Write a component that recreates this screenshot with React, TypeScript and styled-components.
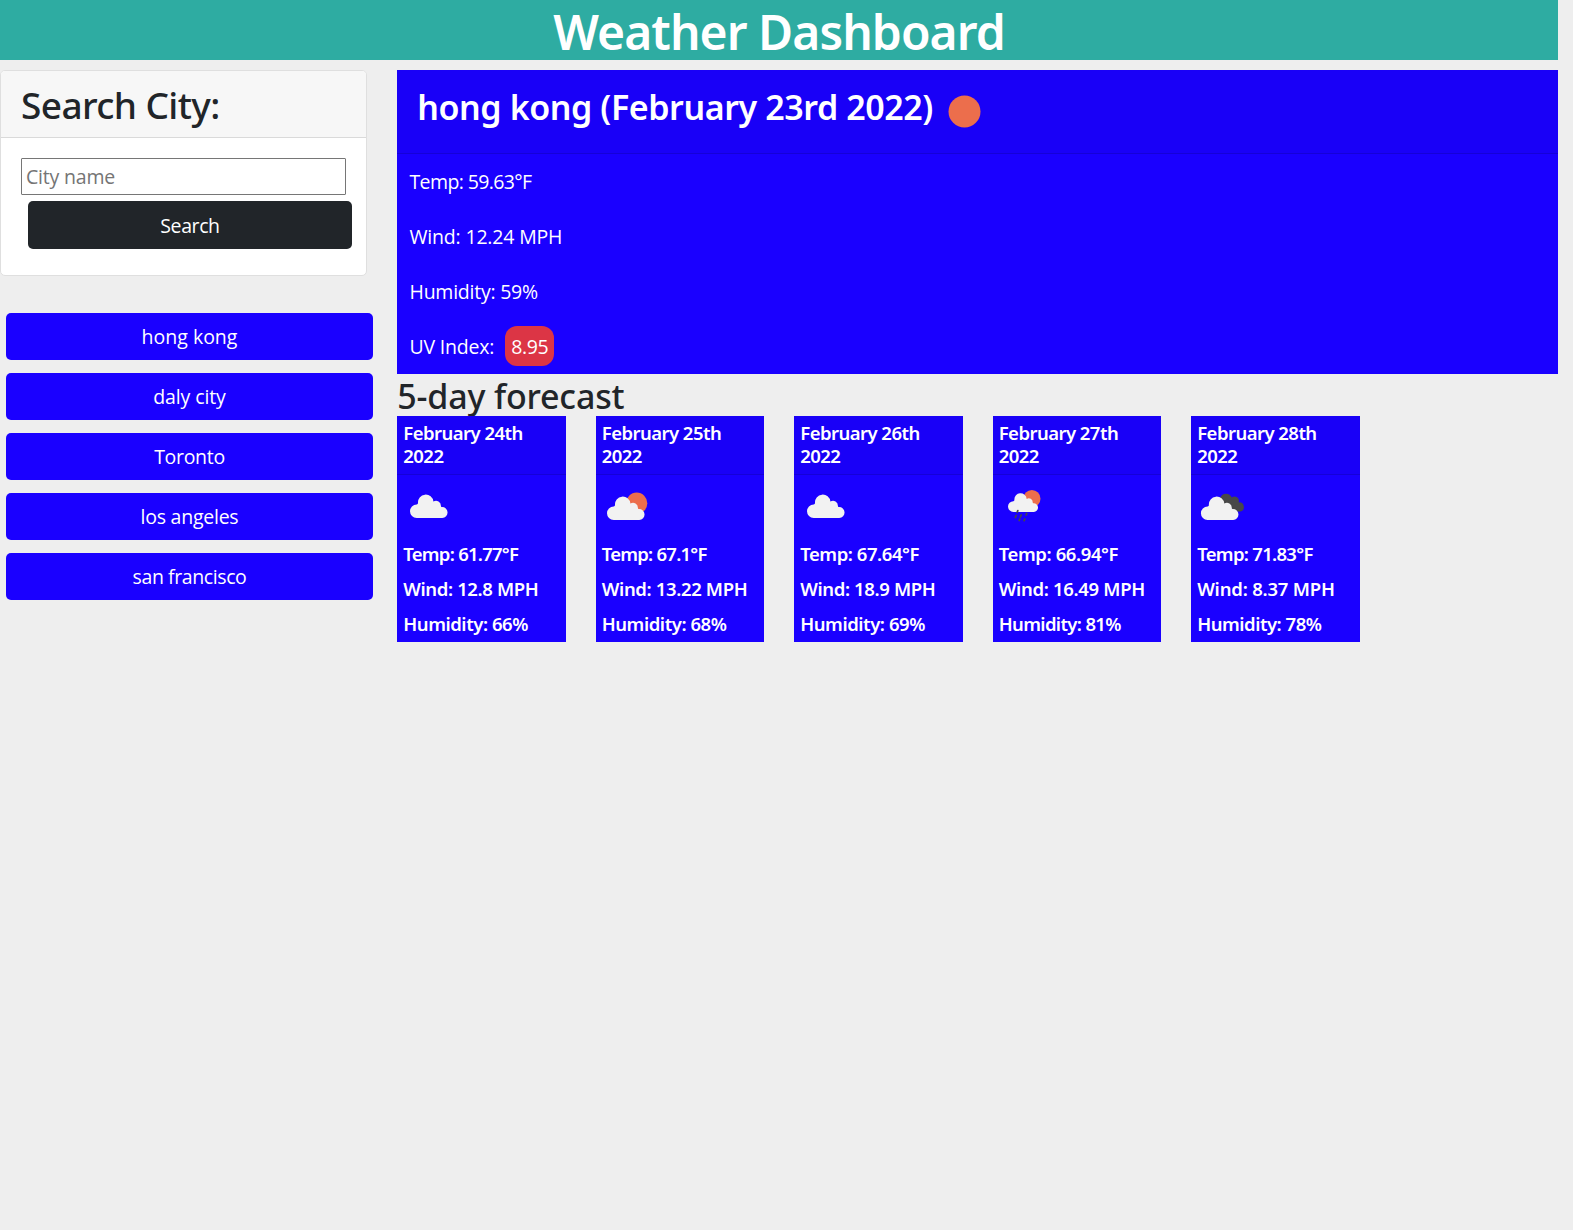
import React from "react";
import styled, { createGlobalStyle } from "styled-components";

const BLUE = "#1a00ff";

const GlobalStyle = createGlobalStyle`
  *, *::before, *::after { box-sizing: border-box; }
  body {
    margin: 0;
    background: #eeeeee;
    color: #212529;
    font-family: "Open Sans", "Noto Sans", sans-serif;
    font-size: 19.5px;
    line-height: 30px;
  }
  h1, h2, h3, h4, p { margin: 0; }
`;

const Page = styled.div`
  width: 1558px;
  min-height: 1230px;
`;

const Header = styled.header`
  height: 60px;
  padding-top: 2px;
  background: #2eaca2;
  color: #fff;
  text-align: center;
`;

const Title = styled.h1`
  font: 600 48px/60px "Noto Sans", sans-serif;
  letter-spacing: -0.95px;
`;

const Columns = styled.div`
  display: flex;
  align-items: flex-start;
  padding-top: 10px;
`;

const Sidebar = styled.aside`
  flex: 0 0 397.25px;
`;

const SearchCard = styled.section`
  width: 367px;
  height: 206px;
  background: #fff;
  border: 1px solid #dfdfdf;
  border-radius: 5px;
  overflow: hidden;
`;

const SearchHead = styled.div`
  height: 67px;
  padding: 10px 20px;
  background: #f7f7f7;
  border-bottom: 1px solid #dadada;
`;

const SearchTitle = styled.h2`
  font: 500 37px/48px "Noto Sans", sans-serif;
  letter-spacing: -0.6px;
`;

const SearchForm = styled.form`
  display: flex;
  flex-direction: column;
  gap: 6px;
  padding: 20px 14px 0 20px;
`;

const CityInput = styled.input`
  width: 325px;
  height: 37px;
  padding: 1px 4px;
  border: 1px solid #767676;
  border-radius: 1px;
  background: #fff;
  font: 400 19.5px/30px "Open Sans", sans-serif;
  letter-spacing: -0.2px;
  &::placeholder { color: #757575; opacity: 1; }
`;

const Button = styled.button<{ $dark?: boolean; $spacing?: number }>`
  display: block;
  height: ${(p) => (p.$dark ? 48 : 47)}px;
  padding: ${(p) => (p.$dark ? 2 : 0)}px 0 0;
  border: 0;
  border-radius: 5px;
  background: ${(p) => (p.$dark ? "#212529" : BLUE)};
  color: #fff;
  font: 400 19.5px/30px "Open Sans", sans-serif;
  letter-spacing: ${(p) => p.$spacing ?? 0}px;
`;

const SearchButton = styled(Button)`
  width: 324px;
  margin-left: 7px;
`;

const History = styled.nav`
  display: grid;
  gap: 13px;
  width: 367px;
  margin: 37px 0 0 6px;
`;

const Main = styled.main`
  flex: 1;
  min-width: 0;
`;

const Today = styled.section`
  height: 304px;
  background: ${BLUE};
  color: #fff;
`;

const TodayHead = styled.div`
  display: flex;
  height: 84px;
  padding: 0 20px;
  background: rgba(0, 0, 0, 0.03);
  border-bottom: 1px solid rgba(0, 0, 0, 0.125);
`;

const TodayTitle = styled.h3`
  padding-top: 12px;
  font: 600 34px/50px "Noto Sans", sans-serif;
  letter-spacing: -0.42px;
`;

const TodayIcon = styled.svg`
  width: 63px;
  height: 63px;
  margin: 10px 0 0;
`;

const TodayBody = styled.div`
  display: grid;
  gap: 15px;
  padding: 7px 12.25px;
`;

const Reading = styled.p<{ $spacing: number }>`
  display: flex;
  gap: 10.5px;
  height: 40px;
  line-height: 42px;
  letter-spacing: ${(p) => p.$spacing}px;
`;

const UvBadge = styled.span`
  width: 49px;
  border-radius: 12px;
  background: #dc3545;
  text-align: center;
  letter-spacing: -0.4px;
  padding-left: 1px;
`;

const ForecastTitle = styled.h3`
  height: 42px;
  padding-top: 1px;
  font: 500 34px/42px "Noto Sans", sans-serif;
  letter-spacing: -0.17px;
`;

const ForecastRow = styled.div`
  display: grid;
  grid-template-columns: repeat(5, 168.6px);
  gap: 29.9px;
`;

const DayCard = styled.article`
  height: 226px;
  background: ${BLUE};
  color: #fff;
  font: 600 18.5px/23px "Noto Sans", sans-serif;
`;

const DayHead = styled.h4`
  height: 59px;
  padding: 5px 6px;
  background: rgba(0, 0, 0, 0.03);
  border-bottom: 1px solid rgba(0, 0, 0, 0.125);
  font: inherit;
  letter-spacing: -0.54px;
`;

const DayBody = styled.div`
  display: grid;
  gap: 12px;
  padding: 5px 6px;
`;

const DayIcon = styled.svg`
  display: block;
  width: 50px;
  height: 50px;
`;

const DayLine = styled.p<{ $spacing: number }>`
  white-space: nowrap;
  letter-spacing: ${(p) => p.$spacing}px;
`;

type Sky = "cloud" | "sunCloud" | "sunRain" | "broken";

const CLOUD =
  "M6.7 23.3A6.7 6.7 0 0 1 6.7 9.9A1.4 1.4 0 0 0 8 8.5A7.72 7.72 0 0 1 23.4 7A4.9 4.9 0 0 1 30.9 11.5A.9.9 0 0 0 31.9 12.4A5.45 5.45 0 0 1 32.3 23.3Z";

function SkyIcon({ sky }: { sky: Sky }) {
  return (
    <DayIcon viewBox="0 0 50 50">
      {sky === "cloud" && <path d={CLOUD} transform="translate(7 14.6)" fill="#f2f2f2" />}
      {sky === "sunCloud" && (
        <>
          <circle cx="34.7" cy="23.2" r="10.6" fill="#ec6e4c" />
          <path d={CLOUD} transform="translate(5 16.6)" fill="#f2f2f2" />
        </>
      )}
      {sky === "sunRain" && (
        <>
          <circle cx="32.9" cy="18.7" r="8.6" fill="#ec6e4c" />
          <path d={CLOUD} transform="translate(9 13.3) scale(.8)" fill="#f2f2f2" />
          <path
            d="M18.8 30.6l-.6 1.7M17.2 35.5l-.8 1.9M22.2 35l-.8 1.9M27.7 33.4l-.6 1.6M20.8 39l-.6 1.5M25.8 39l-.7 1.7"
            stroke="#484848"
            strokeWidth="1.7"
            strokeLinecap="round"
          />
        </>
      )}
      {sky === "broken" && (
        <>
          <path
            d="M23.3 17.8A6.2 6.2 0 0 1 34.8 17.6A4.3 4.3 0 0 1 41.6 22.4A4.7 4.7 0 0 1 43.4 31.6H28Z"
            fill="#484848"
          />
          <path d={CLOUD} transform="translate(3.9 16.6)" fill="#f2f2f2" />
        </>
      )}
    </DayIcon>
  );
}

const cities = [
  { name: "hong kong", spacing: 0 },
  { name: "daly city", spacing: -0.1 },
  { name: "Toronto", spacing: -0.3 },
  { name: "los angeles", spacing: -0.25 },
  { name: "san francisco", spacing: -0.4 },
];

interface Day {
  date: string;
  sky: Sky;
  temp: string;
  tempSpacing: number;
  wind: string;
  windSpacing: number;
  humidity: string;
  humiditySpacing: number;
}

const days: Day[] = [
  { date: "February 24th 2022", sky: "cloud", temp: "61.77", tempSpacing: -0.74, wind: "12.8", windSpacing: -0.38, humidity: "66", humiditySpacing: -0.45 },
  { date: "February 25th 2022", sky: "sunCloud", temp: "67.1", tempSpacing: -0.76, wind: "13.22", windSpacing: -0.36, humidity: "68", humiditySpacing: -0.45 },
  { date: "February 26th 2022", sky: "cloud", temp: "67.64", tempSpacing: -0.45, wind: "18.9", windSpacing: -0.38, humidity: "69", humiditySpacing: -0.45 },
  { date: "February 27th 2022", sky: "sunRain", temp: "66.94", tempSpacing: -0.4, wind: "16.49", windSpacing: -0.32, humidity: "81", humiditySpacing: -0.65 },
  { date: "February 28th 2022", sky: "broken", temp: "71.83", tempSpacing: -0.7, wind: "8.37", windSpacing: -0.2, humidity: "78", humiditySpacing: -0.48 },
];

export default function App() {
  return (
    <Page>
      <GlobalStyle />
      <Header>
        <Title>Weather Dashboard</Title>
      </Header>
      <Columns>
        <Sidebar>
          <SearchCard>
            <SearchHead>
              <SearchTitle>Search City:</SearchTitle>
            </SearchHead>
            <SearchForm onSubmit={(e) => e.preventDefault()}>
              <CityInput placeholder="City name" />
              <SearchButton $dark $spacing={-0.4}>Search</SearchButton>
            </SearchForm>
          </SearchCard>
          <History>
            {cities.map((c) => (
              <Button key={c.name} $spacing={c.spacing}>{c.name}</Button>
            ))}
          </History>
        </Sidebar>
        <Main>
          <Today>
            <TodayHead>
              <TodayTitle>hong kong (February 23rd 2022)</TodayTitle>
              <TodayIcon viewBox="0 0 63 63">
                <circle cx="31.5" cy="31.5" r="16" fill="#ec6e4c" />
              </TodayIcon>
            </TodayHead>
            <TodayBody>
              <Reading $spacing={-0.62}>Temp: 59.63°F</Reading>
              <Reading $spacing={-0.18}>Wind: 12.24 MPH</Reading>
              <Reading $spacing={-0.24}>Humidity: 59%</Reading>
              <Reading $spacing={-0.2}>
                UV Index: <UvBadge>8.95</UvBadge>
              </Reading>
            </TodayBody>
          </Today>
          <ForecastTitle>5-day forecast</ForecastTitle>
          <ForecastRow>
            {days.map((d) => (
              <DayCard key={d.date}>
                <DayHead>{d.date}</DayHead>
                <DayBody>
                  <SkyIcon sky={d.sky} />
                  <DayLine $spacing={d.tempSpacing}>Temp: {d.temp}°F</DayLine>
                  <DayLine $spacing={d.windSpacing}>Wind: {d.wind} MPH</DayLine>
                  <DayLine $spacing={d.humiditySpacing}>Humidity: {d.humidity}%</DayLine>
                </DayBody>
              </DayCard>
            ))}
          </ForecastRow>
        </Main>
      </Columns>
    </Page>
  );
}
